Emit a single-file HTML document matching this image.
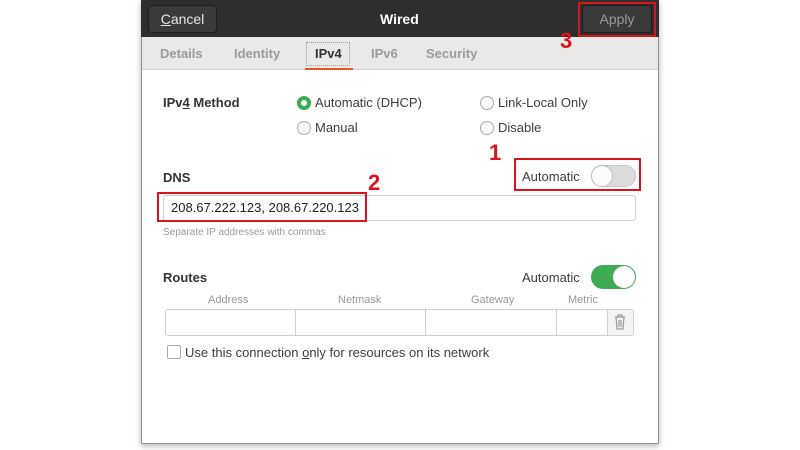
<!DOCTYPE html>
<html><head><style>
*{margin:0;padding:0;box-sizing:border-box}
body{width:800px;height:450px;background:#fff;position:relative;overflow:hidden;font-family:"Liberation Sans","DejaVu Sans",sans-serif;font-size:13px;color:#3d3d3d}
.a{position:absolute}
.dlg{left:141px;top:0;width:518px;height:444px;border:1px solid #8f8f8f;background:#ffffff;box-shadow:0 2px 6px rgba(0,0,0,.3)}
.hdr{left:141px;top:0;width:518px;height:37px;background:#2e2e2e}
.btn{background:#3a3a3a;border:1px solid #1e1e1e;border-radius:4px;color:#e8e8e8;font-size:14px;text-align:center;line-height:26px}
.tabs{left:142px;top:37px;width:516px;height:33px;background:#e9e9e8;border-bottom:1px solid #cfcfcf}
.tab{top:46px;font-weight:bold;color:#9a9a9a;font-size:13px}
.radio{width:14px;height:14px;border:1px solid #aaa;border-radius:50%;background:#fafafa}
.red{border:2px solid #d9141b}
.num{color:#d9141b;font-weight:bold;font-size:22px;z-index:5}
.b{font-weight:bold;color:#333}
.cell{border:1px solid #cfcfcf;height:27px;top:309px;background:#fff}
.ch{top:294px;font-size:11px;color:#999}
</style></head><body>
<div class="a dlg"></div>
<div class="a hdr"></div>
<div class="a btn" style="left:148px;top:5px;width:69px;height:28px"><u>C</u>ancel</div>
<div class="a b" style="left:380px;top:11px;color:#fff;font-size:14px">Wired</div>
<div class="a red" style="left:578px;top:2px;width:78px;height:35px"></div>
<div class="a btn" style="left:582px;top:5px;width:70px;height:28px;color:#9a9a9a">Apply</div>
<div class="a tabs"></div>
<div class="a num" style="left:560px;top:28px">3</div>
<div class="a tab" style="left:160px">Details</div>
<div class="a tab" style="left:234px">Identity</div>
<div class="a tab" style="left:306px;top:42px;width:44px;height:24px;border:1px dotted #999"></div>
<div class="a tab" style="left:315px;color:#333">IPv4</div>
<div class="a" style="left:305px;top:68px;width:48px;height:2px;background:#e95420"></div>
<div class="a tab" style="left:371px">IPv6</div>
<div class="a tab" style="left:426px">Security</div>
<div class="a b" style="left:163px;top:95px">IPv<u>4</u> Method</div>
<div class="a radio" style="left:297px;top:96px;background:#3eaa52;border-color:#3eaa52"></div>
<div class="a" style="left:301px;top:100px;width:6px;height:6px;border-radius:50%;background:#fff"></div>
<div class="a" style="left:315px;top:95px">Automatic (DHCP)</div>
<div class="a radio" style="left:297px;top:121px"></div>
<div class="a" style="left:315px;top:120px">Manual</div>
<div class="a radio" style="left:480px;top:96px"></div>
<div class="a" style="left:498px;top:95px">Link-Local Only</div>
<div class="a radio" style="left:480px;top:121px"></div>
<div class="a" style="left:498px;top:120px">Disable</div>
<div class="a num" style="left:489px;top:140px">1</div>
<div class="a b" style="left:163px;top:170px">DNS</div>
<div class="a red" style="left:514px;top:158px;width:127px;height:33px"></div>
<div class="a" style="left:522px;top:169px">Automatic</div>
<div class="a" style="left:591px;top:165px;width:45px;height:22px;border-radius:11px;background:#dcdcdc;border:1px solid #c8c8c8"></div>
<div class="a" style="left:591px;top:165px;width:22px;height:22px;border-radius:50%;background:#fbfbfb;border:1px solid #bbb"></div>
<div class="a num" style="left:368px;top:170px">2</div>
<div class="a" style="left:163px;top:195px;width:473px;height:26px;border:1px solid #cfcfcf;border-radius:3px"></div>
<div class="a red" style="left:157px;top:192px;width:210px;height:30px"></div>
<div class="a" style="left:171px;top:200px;color:#222">208.67.222.123, 208.67.220.123</div>
<div class="a" style="left:163px;top:227px;font-size:10px;color:#999">Separate IP addresses with commas</div>
<div class="a b" style="left:163px;top:270px">Routes</div>
<div class="a" style="left:522px;top:270px">Automatic</div>
<div class="a" style="left:591px;top:265px;width:45px;height:24px;border-radius:12px;background:#3eaa52"></div>
<div class="a" style="left:613px;top:266px;width:22px;height:22px;border-radius:50%;background:#fff"></div>
<div class="a ch" style="left:208px">Address</div>
<div class="a ch" style="left:338px">Netmask</div>
<div class="a ch" style="left:471px">Gateway</div>
<div class="a ch" style="left:568px">Metric</div>
<div class="a cell" style="left:165px;width:131px;border-radius:3px 0 0 3px"></div>
<div class="a cell" style="left:295px;width:131px"></div>
<div class="a cell" style="left:425px;width:132px"></div>
<div class="a cell" style="left:556px;width:52px"></div>
<div class="a cell" style="left:607px;width:27px;background:#f4f4f4;border-radius:0 3px 3px 0"></div>
<svg class="a" style="left:613px;top:314px" width="14" height="16" viewBox="0 0 14 16"><path d="M2 3h10M5 3V1h4v2M3 3l1 12h6l1-12M6 6v7M8 6v7" stroke="#999" fill="none" stroke-width="1.2"/></svg>
<div class="a" style="left:167px;top:345px;width:14px;height:14px;border:1px solid #aaa;border-radius:2px"></div>
<div class="a" style="left:185px;top:345px">Use this connection <u>o</u>nly for resources on its network</div>
</body></html>
